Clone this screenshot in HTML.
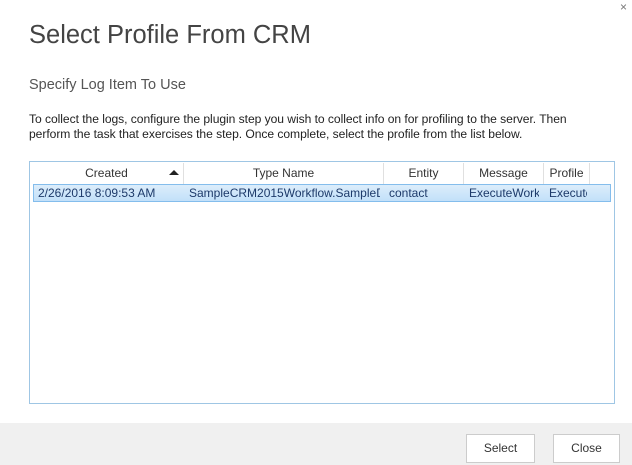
<!DOCTYPE html>
<html><head><style>
body{margin:0;width:632px;height:465px;background:#fff;font-family:"Liberation Sans",sans-serif;position:relative;overflow:hidden;color:#262626}
.a{position:absolute;white-space:nowrap}
.h{position:absolute;top:163px;height:21px;font-size:12px;line-height:21px;text-align:center;border-right:1px solid #e0e0e0;color:#333}
.c{position:absolute;top:185px;height:17px;font-size:12px;line-height:17px;color:#1d3a6a;overflow:hidden}
.btn{position:absolute;top:434px;height:27px;border:1px solid #ccc;background:#fff;font-size:12px;line-height:27px;text-align:center;color:#333}
</style></head><body>
<div class="a" style="left:620px;top:0;font-size:12px;color:#777">×</div>
<div class="a" style="left:29px;top:21px;font-size:25.5px;color:#444">Select Profile From CRM</div>
<div class="a" style="left:29px;top:77px;font-size:14.5px;color:#555">Specify Log Item To Use</div>
<div class="a" style="left:29px;top:112px;font-size:12.1px;line-height:15px;color:#222;letter-spacing:-0.05px">To collect the logs, configure the plugin step you wish to collect info on for profiling to the server. Then<br>perform the task that exercises the step. Once complete, select the profile from the list below.</div>
<div style="position:absolute;left:29px;top:161px;width:584px;height:241px;border:1px solid #9fc6e4;"></div>
<div class="h" style="left:30px;width:153px">Created</div>
<div class="a" style="left:169px;top:170px;width:0;height:0;border-left:5px solid transparent;border-right:5px solid transparent;border-bottom:5px solid #222"></div>
<div class="h" style="left:184px;width:199px">Type Name</div>
<div class="h" style="left:384px;width:79px">Entity</div>
<div class="h" style="left:464px;width:79px">Message</div>
<div class="h" style="left:544px;width:45px">Profile</div>
<div style="position:absolute;left:33px;top:184px;width:578px;height:18px;border:1px solid #84bdec;background:linear-gradient(#dcedfb,#c2e0f9);box-sizing:border-box"></div>
<div class="c" style="left:38px;width:145px">2/26/2016 8:09:53 AM</div>
<div class="c" style="left:189px;width:191px">SampleCRM2015Workflow.SampleD</div>
<div class="c" style="left:389px;width:70px">contact</div>
<div class="c" style="left:469px;width:70px">ExecuteWork</div>
<div class="c" style="left:549px;width:38px">Execute</div>
<div style="position:absolute;left:0;top:423px;width:632px;height:42px;background:#f0f0f0"></div>
<div class="btn" style="left:466px;width:67px">Select</div>
<div class="btn" style="left:553px;width:65px">Close</div>
</body></html>
